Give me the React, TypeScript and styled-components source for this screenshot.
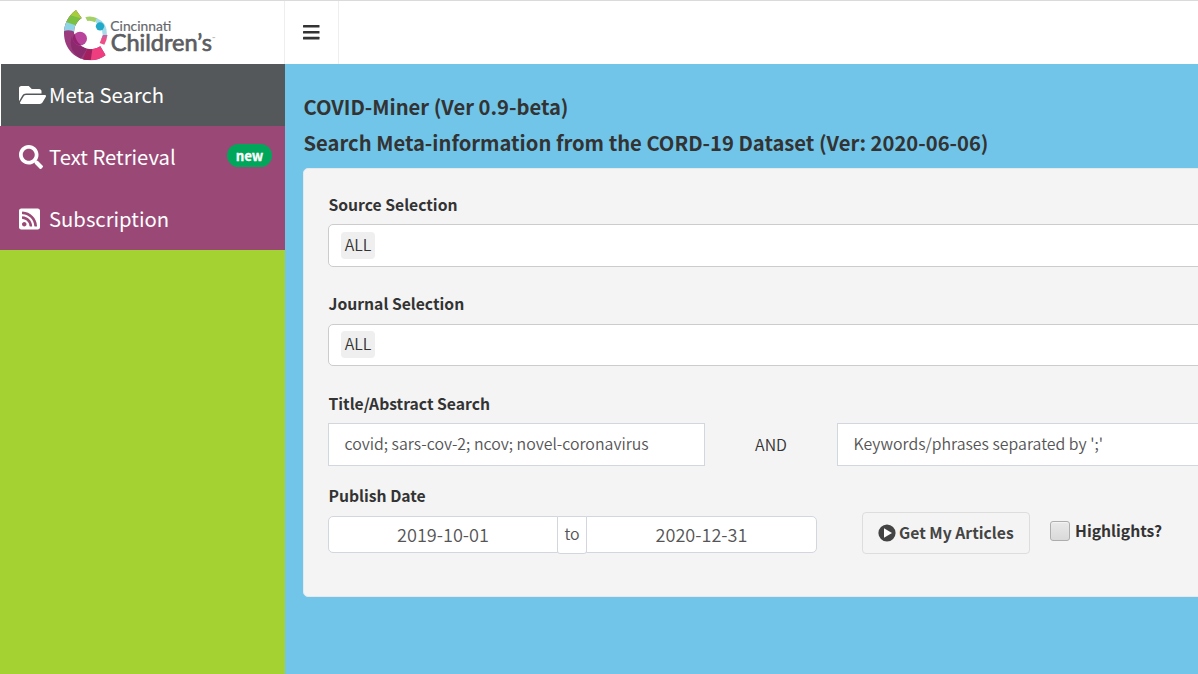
import React from "react";
import styled, { createGlobalStyle } from "styled-components";
import { FaFolderOpen, FaSearch, FaRssSquare } from "react-icons/fa";

const GlobalStyle = createGlobalStyle`
  * { box-sizing: border-box; }
  body {
    margin: 0;
    overflow: hidden;
    font-family: "Noto Sans CJK SC", "Open Sans", sans-serif;
    color: #333;
  }
`;

const Page = styled.div`
  height: 674px;
  display: flex;
  flex-direction: column;
  overflow: hidden;
`;

const Header = styled.header`
  height: 64px;
  flex: none;
  display: flex;
  background: #fff;
  border-top: 1px solid #dadada;
`;

const Brand = styled.div`
  width: 285px;
  border-right: 1px solid #eee;
  padding: 7px 0 0 60px;
`;

const MenuToggle = styled.button`
  width: 54px;
  border: 0;
  border-right: 1px solid #eee;
  background: none;
  display: flex;
  justify-content: center;
  padding: 24px 0 0;
`;

const Body = styled.div`
  flex: 1;
  display: flex;
  min-height: 0;
`;

const Sidebar = styled.nav`
  width: 285px;
  flex: none;
  background: #a4d233;
`;

const NavItem = styled.a<{ $active?: boolean }>`
  height: 62px;
  display: flex;
  align-items: center;
  padding: 0 13px 0 ${(p) => (p.$active ? 18 : 19)}px;
  border-left: ${(p) => (p.$active ? "1px solid #fff" : "0")};
  background: ${(p) => (p.$active ? "#54585a" : "#9a4977")};
  color: #fff;
  font-size: 20.25px;
  line-height: 26px;
`;

const NavIcon = styled.span<{ $width: number }>`
  width: 30px;
  height: 24px;
  margin-bottom: 1px;
  display: flex;
  align-items: center;
  svg {
    flex: none;
    width: ${(p) => p.$width}px;
    height: 24px;
  }
`;

const NavText = styled.span`
  flex: 1;
  padding-bottom: 1px;
`;

const Badge = styled.span`
  width: 45px;
  height: 23px;
  margin-bottom: 3px;
  border-radius: 12px;
  background: #00a65a;
  font-size: 13.3px;
  font-weight: 700;
  line-height: 23px;
  text-align: center;
  -webkit-text-stroke: 0.3px #fff;
`;

const Content = styled.main`
  flex: 1;
  min-width: 0;
  overflow: hidden;
  background: #71c5e8;
  padding: 25px 0 0 18px;
`;

const Title = styled.h1`
  margin: 0;
  padding-left: 0.5px;
  font-size: 20.2px;
  font-weight: 700;
  line-height: 36px;
  white-space: nowrap;
`;

const Panel = styled.section`
  width: 1000px;
  height: 429px;
  margin-top: 7px;
  padding: 26px 24px 0;
  border: 1px solid #e6e8ea;
  border-radius: 5px;
  background: #f4f4f4;
`;

const Label = styled.label<{ $gap?: number }>`
  display: block;
  margin-top: ${(p) => p.$gap ?? 0}px;
  padding-left: 0.5px;
  font-size: 15.7px;
  font-weight: 700;
  line-height: 20px;
`;

const Select = styled.div<{ $height: number }>`
  height: ${(p) => p.$height}px;
  margin-top: ${(p) => (p.$height === 43 ? 9 : 10)}px;
  padding: ${(p) => (p.$height === 43 ? 7 : 6)}px 12px;
  border: 1px solid #ccc;
  border-radius: 5px;
  background: #fff;
`;

const Chip = styled.span`
  display: block;
  width: 34px;
  height: 27px;
  border-radius: 4px;
  background: #efefef;
  font-size: 15.9px;
  font-weight: 350;
  line-height: 25px;
  text-align: center;
`;

const SearchRow = styled.div`
  display: flex;
  margin-top: 9px;
`;

const TextInput = styled.div`
  width: 377px;
  height: 43px;
  flex: none;
  padding-left: 15.5px;
  border: 1px solid #d2d6de;
  background: #fff;
  color: #555;
  font-size: 15.88px;
  font-weight: 350;
  line-height: 39px;
  white-space: nowrap;
`;

const Operator = styled.span`
  width: 132px;
  font-size: 15.9px;
  font-weight: 350;
  line-height: 43px;
  text-align: center;
`;

const ActionRow = styled.div`
  display: flex;
  align-items: flex-start;
  margin-top: 6px;
`;

const DateRange = styled.div`
  display: flex;
  margin-top: 4px;
  color: #555;
  font-weight: 350;
`;

const DateInput = styled.div<{ $end?: boolean }>`
  width: ${(p) => (p.$end ? 231 : 230)}px;
  height: 37px;
  border: 1px solid #d2d6de;
  border-radius: ${(p) => (p.$end ? "0 5px 5px 0" : "5px 0 0 5px")};
  background: #fff;
  font-size: 18.1px;
  line-height: 35px;
  text-align: center;
`;

const DateSeparator = styled.span`
  width: 30px;
  height: 38px;
  margin: 0 -1px;
  border: 1px solid #d2d6de;
  border-radius: 0 0 3px 3px;
  background: #fff;
  font-size: 15.9px;
  line-height: 33px;
  text-align: center;
`;

const SubmitButton = styled.button`
  width: 168px;
  height: 42px;
  margin-left: 45px;
  padding: 0 0 0 15px;
  display: flex;
  align-items: center;
  gap: 3px;
  border: 1px solid #ddd;
  border-radius: 4px;
  background: #f4f4f4;
  color: #444;
  font-family: inherit;
  font-size: 15.7px;
  font-weight: 700;
  line-height: 20px;
  white-space: nowrap;
`;

const CheckLabel = styled.label`
  display: flex;
  align-items: center;
  gap: 5px;
  margin: 8px 0 0 20px;
  font-size: 15.7px;
  font-weight: 700;
  line-height: 20px;
`;

const CheckBox = styled.span`
  width: 20px;
  height: 20px;
  margin-top: 1px;
  border: 1px solid #adadad;
  border-radius: 3px;
  background: linear-gradient(#e9e9e9, #d9d9d9);
  box-shadow: inset 0 1px 1px #f4f4f4;
`;

const Logo = () => (
  <svg width="160" height="54" viewBox="30 24 480 162">
    <clipPath id="swoosh">
      <path d="M78 30 C52 50 42 75 42 100 C42 146 76 181 120 181 C138 181 155 175 167 166 L151 139 A48 48 0 0 1 95 54Z" />
    </clipPath>
    <g clipPath="url(#swoosh)">
      <rect x="40" y="28" width="130" height="155" fill="#9b3a7d" />
      <path d="M40 28 H110 V58 L84 56 L56 45Z" fill="#a6ce39" />
      <path d="M40 40 L56 44 L97 56 L80 79 L40 68Z" fill="#7ac143" />
      <path d="M40 66 L50 67 L84 78 L78 98 Q58 86 40 94Z" fill="#8ed3e6" />
      <path d="M66 108 Q66 136 98 137 L110 148 L92 176 Q52 150 66 108Z" fill="#8b2a6c" />
      <path d="M112 146 L130 146 L136 183 L96 183 Z" fill="#a3205f" />
      <path d="M128 140 L160 130 L175 183 L122 183Z" fill="#ee3e7f" />
    </g>
    <circle cx="90" cy="116" r="21" fill="#b9449b" />
    <path d="M74 101 Q66 110 70 123 Q77 137 94 136 Q78 126 74 101Z" fill="#93226f" />
    <path d="M106 52 Q122 46 142 55 L135 67 Q122 60 112 63Z" fill="#a3d165" />
    <path d="M140 54 Q173 68 171 106 L158 105 Q158 82 136 66Z" fill="#a5dbe9" />
    <circle cx="150" cy="79" r="12.5" fill="#20a9c8" />
    <path d="M159 105 L172 105 Q171 120 163 134 L149 129Z" fill="#ee4f86" />
    <path d="M159 105 L172 105 L171 111 L154 117Z" fill="#c6619f" />
    <text x="181" y="94" fontFamily="Lato" fontSize="40" fill="#65676b" stroke="#65676b" strokeWidth="0.5" textLength="183" lengthAdjust="spacingAndGlyphs">Cincinnati</text>
    <text x="182" y="154" fontFamily="Lato" fontSize="67" fill="#5b5d61" stroke="#5b5d61" strokeWidth="2" textLength="304" lengthAdjust="spacingAndGlyphs">Children’s</text>
    <text x="487" y="120" fontFamily="Lato" fontSize="12" fill="#777">™</text>
  </svg>
);

const BarsIcon = () => (
  <svg width="17" height="15" viewBox="0 0 17 15" fill="#333">
    <rect x="0" y="0" width="16.5" height="2.6" rx="0.5" />
    <rect x="0" y="6" width="16.5" height="2.6" rx="0.5" />
    <rect x="0" y="11.8" width="16.5" height="2.6" rx="0.5" />
  </svg>
);

const PlayIcon = () => (
  <svg width="18" height="18" viewBox="0 0 18 18">
    <circle cx="9" cy="9" r="8.6" fill="#444" />
    <path d="M6 4.2 L14 9 L6 13.8Z" fill="#fff" />
  </svg>
);

export default function App() {
  return (
    <Page>
      <GlobalStyle />
      <Header>
        <Brand><Logo /></Brand>
        <MenuToggle aria-label="Toggle navigation"><BarsIcon /></MenuToggle>
      </Header>
      <Body>
        <Sidebar>
          <NavItem $active>
            <NavIcon $width={27}><FaFolderOpen preserveAspectRatio="none" /></NavIcon>
            <NavText>Meta Search</NavText>
          </NavItem>
          <NavItem>
            <NavIcon $width={24}><FaSearch /></NavIcon>
            <NavText>Text Retrieval</NavText>
            <Badge>new</Badge>
          </NavItem>
          <NavItem>
            <NavIcon $width={21}><FaRssSquare /></NavIcon>
            <NavText>Subscription</NavText>
          </NavItem>
        </Sidebar>
        <Content>
          <Title>COVID-Miner (Ver 0.9-beta)</Title>
          <Title>Search Meta-information from the CORD-19 Dataset (Ver: 2020-06-06)</Title>
          <Panel>
            <Label>Source Selection</Label>
            <Select $height={43}><Chip>ALL</Chip></Select>
            <Label $gap={27}>Journal Selection</Label>
            <Select $height={42}><Chip>ALL</Chip></Select>
            <Label $gap={28}>Title/Abstract Search</Label>
            <SearchRow>
              <TextInput>covid; sars-cov-2; ncov; novel-coronavirus</TextInput>
              <Operator>AND</Operator>
              <TextInput>Keywords/phrases separated by ';'</TextInput>
            </SearchRow>
            <Label $gap={20}>Publish Date</Label>
            <ActionRow>
              <DateRange>
                <DateInput>2019-10-01</DateInput>
                <DateSeparator>to</DateSeparator>
                <DateInput $end>2020-12-31</DateInput>
              </DateRange>
              <SubmitButton><PlayIcon />Get My Articles</SubmitButton>
              <CheckLabel><CheckBox />Highlights?</CheckLabel>
            </ActionRow>
          </Panel>
        </Content>
      </Body>
    </Page>
  );
}
